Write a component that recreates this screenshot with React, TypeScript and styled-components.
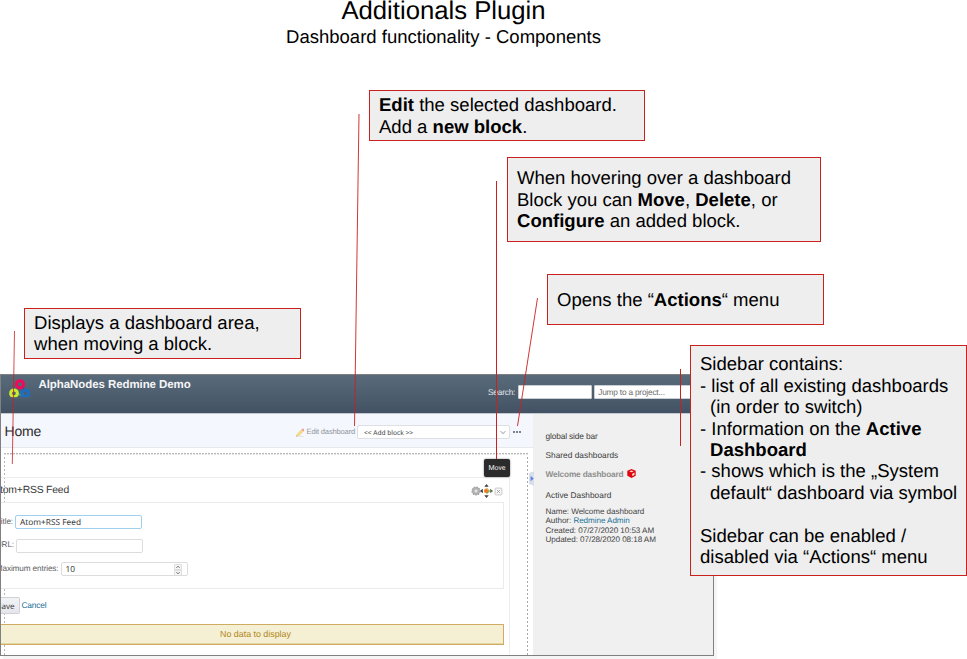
import React from 'react';
import styled, { createGlobalStyle } from 'styled-components';

const Global = createGlobalStyle`
  * { box-sizing: border-box; }
  html, body { margin: 0; padding: 0; background: #fff; }
  body {
    overflow: hidden;
    font-family: "Liberation Sans", Arial, sans-serif;
    text-rendering: geometricPrecision;
  }
`;

const Slide = styled.main`
  position: relative;
  display: flex;
  flex-direction: column;
  width: 967px;
  height: 659px;
  overflow: hidden;
  color: #000;
`;

const Heading = styled.header`
  width: 887px;
  height: 374px;
  flex: none;
  text-align: center;
`;
const Title = styled.h1`
  margin: 0;
  font-size: 25.7px;
  line-height: 23px;
  font-weight: 400;
`;
const Subtitle = styled.p`
  margin: 3px 0 0;
  font-size: 18.53px;
  line-height: 22px;
`;

/* Application window */
const Frame = styled.section`
  display: flex;
  flex-direction: column;
  flex: none;
  width: 714px;
  height: 282px;
  border: 1px solid #808080;
  box-shadow: 3px 3px 0 #f5f5f5;
  overflow: hidden;
  font-size: 8px;
  line-height: 10px;
  color: #3c3c3c;
`;
const TopBar = styled.div`
  display: flex;
  flex: none;
  height: 39px;
  border-bottom: 1px solid #c3c8cf;
  background: linear-gradient(#596b7a, #425264);
  color: #e4e8ec;
`;
const LogoBox = styled.div`
  width: 37.5px;
  padding: 4px 0 0 8px;
`;
const AppName = styled.div`
  flex: 1;
  padding-top: 4px;
  font-size: 11.5px;
  letter-spacing: -0.08px;
  line-height: 13px;
  font-weight: 700;
  color: #f4f5f7;
`;
const SearchArea = styled.div`
  display: flex;
  align-items: center;
  height: 33px;
  width: 225px;
  font-size: 8.3px;
  letter-spacing: -0.2px;
`;
const HeaderField = styled.div<{ $w: number }>`
  flex: none;
  width: ${p => p.$w}px;
  height: 14px;
  margin-left: 2.5px;
  padding-left: 3px;
  border: 1px solid #c9ced4;
  border-radius: 1px;
  background: #fff;
  color: #6c6c6c;
  line-height: 13px;
`;
const Body = styled.div`
  display: flex;
  flex: 1;
  min-height: 0;
`;
const Main = styled.div`
  display: flex;
  flex-direction: column;
  width: 532px;
  background: #fff;
`;
const Toolbar = styled.div`
  display: flex;
  align-items: center;
  flex: none;
  height: 34px;
  padding-left: 3.6px;
  border-bottom: 1px solid #e6e8eb;
  background: #f4f7fd;
`;
const PageTitle = styled.h2`
  flex: none;
  width: 291px;
  margin: 0;
  font-size: 14px;
  letter-spacing: -0.2px;
  line-height: 16px;
  font-weight: 400;
  color: #2c2c2c;
`;
const EditLink = styled.a`
  display: flex;
  align-items: center;
  gap: 2px;
  width: 61.4px;
  padding-top: 3px;
  font-size: 7.6px;
  letter-spacing: -0.19px;
  color: #92959c;
  white-space: nowrap;
`;
const BlockSelect = styled.div`
  display: flex;
  align-items: center;
  justify-content: space-between;
  width: 153px;
  height: 14px;
  margin-top: 3px;
  padding: 1px 3px 0 6px;
  border: 1px solid #dddfe2;
  border-radius: 2px;
  background: #fff;
  font-family: "Noto Sans", sans-serif;
  font-size: 6.6px;
`;
const MoreDots = styled.span`
  display: flex;
  gap: 1px;
  margin: 3px 0 0 3px;
  i { width: 2px; height: 2px; border-radius: 1px; background: #555b63; }
`;

const DashArea = styled.div`
  flex: 1;
  min-height: 0;
  width: 524px;
  margin: 5px 0 0 3px;
  padding: 24px 0 0 0;
  background:
    repeating-linear-gradient(90deg, #b8b8b8 0 2px, transparent 2px 3px) 0 0 / 100% 1px no-repeat,
    repeating-linear-gradient(90deg, #e4e4e4 0 2px, transparent 2px 3px) 0 1px / 100% 1px no-repeat,
    repeating-linear-gradient(#b6b6b6 0 2px, transparent 2px 4px) 0 0 / 1px 100% no-repeat,
    repeating-linear-gradient(#a8a8a8 0 2px, transparent 2px 4px) 100% 0 / 1px 100% no-repeat;
`;
const Block = styled.div`
  display: flex;
  flex-direction: column;
  width: 509px;
  height: 180px;
  margin-left: -3px;
  border: solid #ededed;
  border-width: 1px 1px 0 0;
`;
const BlockHeader = styled.div`
  display: flex;
  align-items: center;
  justify-content: space-between;
  flex: none;
  height: 24px;
  padding-right: 6px;
`;
const BlockTitle = styled.h3`
  margin: 1px 0 0 -7.7px;
  font-size: 10.4px;
  letter-spacing: -0.2px;
  line-height: 13px;
  font-weight: 400;
  color: #383838;
`;
const BlockTools = styled.div`
  display: flex;
  align-items: center;
  padding-top: 2px;
  svg + svg { margin-left: -1px; }
  svg:last-child { margin-left: 1px; }
`;
const Settings = styled.div`
  display: flex;
  flex-direction: column;
  flex: none;
  width: 503px;
  height: 87px;
  padding-top: 7.5px;
  border: solid #ebebeb;
  border-width: 1px 1px 1px 0;
  background: #fff;
`;
const FieldRow = styled.label<{ $w: number }>`
  display: grid;
  grid-template-columns: ${p => p.$w}px 127px;
  column-gap: 2px;
  align-items: center;
  height: 23.5px;
  font-size: 8.2px;
  letter-spacing: -0.12px;
  color: #5e5e5e;
`;
const LabelText = styled.span`
  display: flex;
  justify-content: flex-end;
  padding-bottom: 0.6px;
  white-space: nowrap;
`;
const Input = styled.span<{ $active?: boolean }>`
  display: flex;
  align-items: center;
  justify-content: space-between;
  height: 14px;
  padding: 1px 5px 0 4px;
  border: 1px solid ${p => (p.$active ? '#9fd0ee' : '#dcdcdc')};
  border-radius: 2px;
  background: #fff;
  font-family: "Noto Sans", sans-serif;
  font-size: 8.3px;
  letter-spacing: 0;
  color: #3c3c3c;
`;
const Actions = styled.div`
  display: flex;
  align-items: center;
  flex: none;
  height: 17px;
  margin: 8px 0 10px;
`;
const SaveButton = styled.span`
  display: flex;
  justify-content: flex-end;
  align-items: center;
  width: 19px;
  height: 17px;
  padding: 2px 4.5px 0 0;
  border: 1px solid #cfd1d6;
  border-left: 0;
  border-radius: 0 2px 2px 0;
  background: linear-gradient(#f2f3f6, #e4e6ec);
  font-family: "Noto Sans", sans-serif;
`;
const Link = styled.a`
  color: #1d7096;
`;
const CancelLink = styled(Link)`
  padding: 0 0 1px 1.5px;
  font-size: 8.4px;
  letter-spacing: -0.2px;
`;
const EmptyNotice = styled.div`
  flex: none;
  width: 503px;
  height: 21px;
  padding-left: 7px;
  border: 1px solid #d0ac62;
  border-left: 0;
  background: #f5efd3;
  box-shadow: inset 0 -1px 0 #e5d6a5;
  color: #b08620;
  font-size: 8.85px;
  line-height: 19px;
  text-align: center;
`;

const Sidebar = styled.aside`
  flex: 1;
  padding: 16.6px 0 0 12.5px;
  background: #f0f0f0;
`;
const SideItem = styled.div<{ $gap?: number; $spacing?: number; $current?: boolean }>`
  display: flex;
  align-items: center;
  gap: 4px;
  height: 10px;
  margin-bottom: ${p => p.$gap ?? 0}px;
  font-size: 8.3px;
  letter-spacing: ${p => p.$spacing ?? 0.02}px;
  font-weight: ${p => (p.$current ? 700 : 400)};
  color: ${p => (p.$current ? '#8f8f8f' : '#3c3c3c')};
`;
const Meta = styled.div`
  font-size: 8.1px;
  letter-spacing: -0.06px;
  line-height: 9.4px;
  color: #444;
`;

/* Annotations laid over the window */
const Callout = styled.div<{ $x: number; $y: number; $w: number; $h: number; $lift?: number }>`
  position: absolute;
  left: ${p => p.$x}px;
  top: ${p => p.$y}px;
  width: ${p => p.$w}px;
  height: ${p => p.$h}px;
  display: flex;
  flex-direction: column;
  justify-content: center;
  padding: 0 0 ${p => p.$lift ?? 0}px 9px;
  border: 1px solid #c9211e;
  background: #eee;
  font-size: 18.54px;
  line-height: 21.4px;
  white-space: pre;
`;
const Line = styled.div<{ $indent?: boolean }>`
  height: 21.4px;
  padding-left: ${p => (p.$indent ? 10 : 0)}px;
`;
const Spacer = styled.div`
  height: 21.8px;
`;
const Pointers = styled.svg`
  position: absolute;
  inset: 0;
  pointer-events: none;
`;
const Tooltip = styled.div`
  position: absolute;
  left: 484px;
  top: 459px;
  width: 26px;
  height: 18px;
  border-radius: 2px;
  background: #2b2b2b;
  box-shadow: 0 0 2px #777;
  color: #eee;
  font: 7px/18px Roboto, sans-serif;
  text-align: center;
`;
const Collapser = styled.svg`
  position: absolute;
  left: 529px;
  top: 471px;
`;

const Logo = () => (
  <svg width="22" height="20" viewBox="0 0 22 20">
    <g fill="none" strokeWidth="3">
      <path d="M6 15.5h9" stroke="#4f9a80" strokeWidth="2" />
      <circle cx="11" cy="5.3" r="3.6" stroke="#f5085c" />
      <circle cx="5" cy="14.3" r="3.4" stroke="#c9ec2c" />
      <circle cx="16.3" cy="14.3" r="3.4" stroke="#1b6fc0" />
      <path d="M13.2 8.5l2 2" stroke="#753e70" strokeWidth="1.5" />
    </g>
    <path d="M0 18.2h22V20H0z" fill="#4e5f6f" />
  </svg>
);
const Pencil = () => (
  <svg width="9" height="9" viewBox="0 0 9 9">
    <path d="M.5 8.4l.9-2.7L5.8 1.3l1.9 1.8-4.4 4.4z" fill="#f7da85" stroke="#e5cb8c" strokeWidth=".5" />
    <path d="M5.6 1.4l.9-.8q1.4 0 1.9 1.6l-.9 1z" fill="#ee9aa0" />
    <path d="M.3 8.6l.5-1.3.8.8z" fill="#997b5c" />
    <path d="M3 8.6h4.5" stroke="#d5d5d5" strokeWidth=".7" />
  </svg>
);
const Chevron = () => (
  <svg width="6" height="5" viewBox="0 0 6 5">
    <path d="M.7 1.2L3 3.7l2.3-2.5" fill="none" stroke="#888" strokeWidth=".9" />
  </svg>
);
const Gear = () => (
  <svg width="10" height="10" viewBox="0 0 10 10">
    <circle cx="5" cy="5" r="3.9" fill="#b4b4b4" stroke="#a0a0a0" strokeWidth="1.4" strokeDasharray="1.5 1.1" />
    <circle cx="5" cy="5" r="2.3" fill="#cfcfcf" stroke="#a5a5a5" strokeWidth=".6" />
    <circle cx="5" cy="5" r=".9" fill="#eee" />
  </svg>
);
const Move = () => (
  <svg width="13" height="14" viewBox="0 0 13 14">
    <g fill="#3d3d3d">
      <path d="M6.5 0l2.2 2.7H4.3zM6.5 14l2.2-2.7H4.3z" />
      <path d="M0 7l2.8-2.2v4.4z" />
    </g>
    <path d="M13 7l-2.8-2.2v4.4z" fill="#556b4a" />
    <path d="M6.5 3.4L10.2 7l-3.7 3.6z" fill="#7fae55" />
    <path d="M6.5 3.4L4.3 5.6 6.5 7l3-1z" fill="#e6c58f" />
    <circle cx="6" cy="7" r="2" fill="#f0761d" />
  </svg>
);
const CloseBox = () => (
  <svg width="9" height="9" viewBox="0 0 9 9">
    <rect x="1.1" y="1.1" width="6.8" height="6.8" rx=".8" fill="#fafafa" stroke="#bcbcbc" strokeWidth=".8" />
    <path d="M2.9 2.9l3.2 3.2M6.1 2.9L2.9 6.1" stroke="#a0a0a0" strokeWidth=".9" />
  </svg>
);
const Cube = () => (
  <svg width="9" height="9" viewBox="0 0 9 9">
    <path d="M4.5.1l4.2 1.7v4.9L4.5 8.9.3 6.7V1.8z" fill="#e0040c" />
    <path d="M2.2 2.3l2.3-.9 2.3.9-2.3 1zM5.2 4.7l2.3-1.1v2.3L5.2 7.1z" fill="#f6dede" />
  </svg>
);
const Spinner = () => (
  <svg width="8" height="12" viewBox="0 0 8 12">
    <path d="M.5.5h7v5h-7zM.5 6.5h7v5h-7z" fill="#f6f6f6" stroke="#d5d5d5" strokeWidth=".8" />
    <path d="M2.4 3.8L4 2.2l1.6 1.6M2.4 8.2L4 9.8l1.6-1.6" fill="none" stroke="#555" strokeWidth=".9" />
  </svg>
);

export default function App() {
  return (
    <Slide>
      <Global />
      <Heading>
        <Title>Additionals Plugin</Title>
        <Subtitle>Dashboard functionality - Components</Subtitle>
      </Heading>

      <Frame>
        <TopBar>
          <LogoBox><Logo /></LogoBox>
          <AppName>AlphaNodes Redmine Demo</AppName>
          <SearchArea>
            Search:
            <HeaderField $w={74} />
            <HeaderField $w={125}>Jump to a project...</HeaderField>
          </SearchArea>
        </TopBar>
        <Body>
          <Main>
            <Toolbar>
              <PageTitle>Home</PageTitle>
              <EditLink><Pencil />Edit dashboard</EditLink>
              <BlockSelect>&lt;&lt; Add block &gt;&gt;<Chevron /></BlockSelect>
              <MoreDots><i /><i /><i /></MoreDots>
            </Toolbar>
            <DashArea>
              <Block>
                <BlockHeader>
                  <BlockTitle>Atom+RSS Feed</BlockTitle>
                  <BlockTools><Gear /><Move /><CloseBox /></BlockTools>
                </BlockHeader>
                <Settings>
                  <FieldRow $w={12}>
                    <LabelText>Title:</LabelText>
                    <Input $active>Atom+RSS Feed</Input>
                  </FieldRow>
                  <FieldRow $w={13}>
                    <LabelText>URL:</LabelText>
                    <Input />
                  </FieldRow>
                  <FieldRow $w={57.5}>
                    <LabelText>Maximum entries:</LabelText>
                    <Input>10<Spinner /></Input>
                  </FieldRow>
                </Settings>
                <Actions>
                  <SaveButton>Save</SaveButton>
                  <CancelLink>Cancel</CancelLink>
                </Actions>
                <EmptyNotice>No data to display</EmptyNotice>
              </Block>
            </DashArea>
          </Main>
          <Sidebar>
            <SideItem $gap={9} $spacing={-0.13}>global side bar</SideItem>
            <SideItem $gap={9}>Shared dashboards</SideItem>
            <SideItem $gap={11.4} $current $spacing={-0.18}>Welcome dashboard<Cube /></SideItem>
            <SideItem $gap={7}>Active Dashboard</SideItem>
            <Meta>Name: Welcome dashboard</Meta>
            <Meta>Author: <Link>Redmine Admin</Link></Meta>
            <Meta>Created: 07/27/2020 10:53 AM</Meta>
            <Meta>Updated: 07/28/2020 08:18 AM</Meta>
          </Sidebar>
        </Body>
      </Frame>

      <Collapser width="5" height="15" viewBox="0 0 5 15">
        <path d="M5 .5a7 7 0 0 0 0 14z" fill="#d9deed" />
        <path d="M1.6 5l3.2 2.6-3.2 2.6z" fill="#5b84d8" />
      </Collapser>
      <Tooltip>Move</Tooltip>

      <Callout $x={369} $y={90} $w={276} $h={51}>
        <Line><b>Edit</b> the selected dashboard.</Line>
        <Line>Add a <b>new block</b>.</Line>
      </Callout>
      <Callout $x={507} $y={157} $w={314} $h={85} $lift={0.4}>
        <Line>When hovering over a dashboard</Line>
        <Line>Block you can <b>Move</b>, <b>Delete</b>, or</Line>
        <Line><b>Configure</b> an added block.</Line>
      </Callout>
      <Callout $x={547} $y={274} $w={277} $h={51}>
        <Line>Opens the “<b>Actions</b>“ menu</Line>
      </Callout>
      <Callout $x={24} $y={308} $w={277} $h={51} $lift={0.6}>
        <Line>Displays a dashboard area,</Line>
        <Line>when moving a block.</Line>
      </Callout>
      <Callout $x={690} $y={345} $w={277} $h={231}>
        <Line>Sidebar contains:</Line>
        <Line>- list of all existing dashboards</Line>
        <Line $indent>(in order to switch)</Line>
        <Line>- Information on the <b>Active</b></Line>
        <Line $indent><b>Dashboard</b></Line>
        <Line>- shows which is the „System</Line>
        <Line $indent>default“ dashboard via symbol</Line>
        <Spacer />
        <Line>Sidebar can be enabled /</Line>
        <Line>disabled via “Actions“ menu</Line>
      </Callout>

      <Pointers width="967" height="659" fill="none" stroke="#c9211e" strokeWidth="1">
        <path d="M14.5 331L12.3 464" strokeWidth=".8" />
        <path d="M359 114L354.5 426" strokeWidth=".9" />
        <path d="M496.5 181V459" />
        <path d="M537.5 298L517.5 426" strokeWidth=".9" />
        <path d="M680.5 369V446" />
      </Pointers>
    </Slide>
  );
}
